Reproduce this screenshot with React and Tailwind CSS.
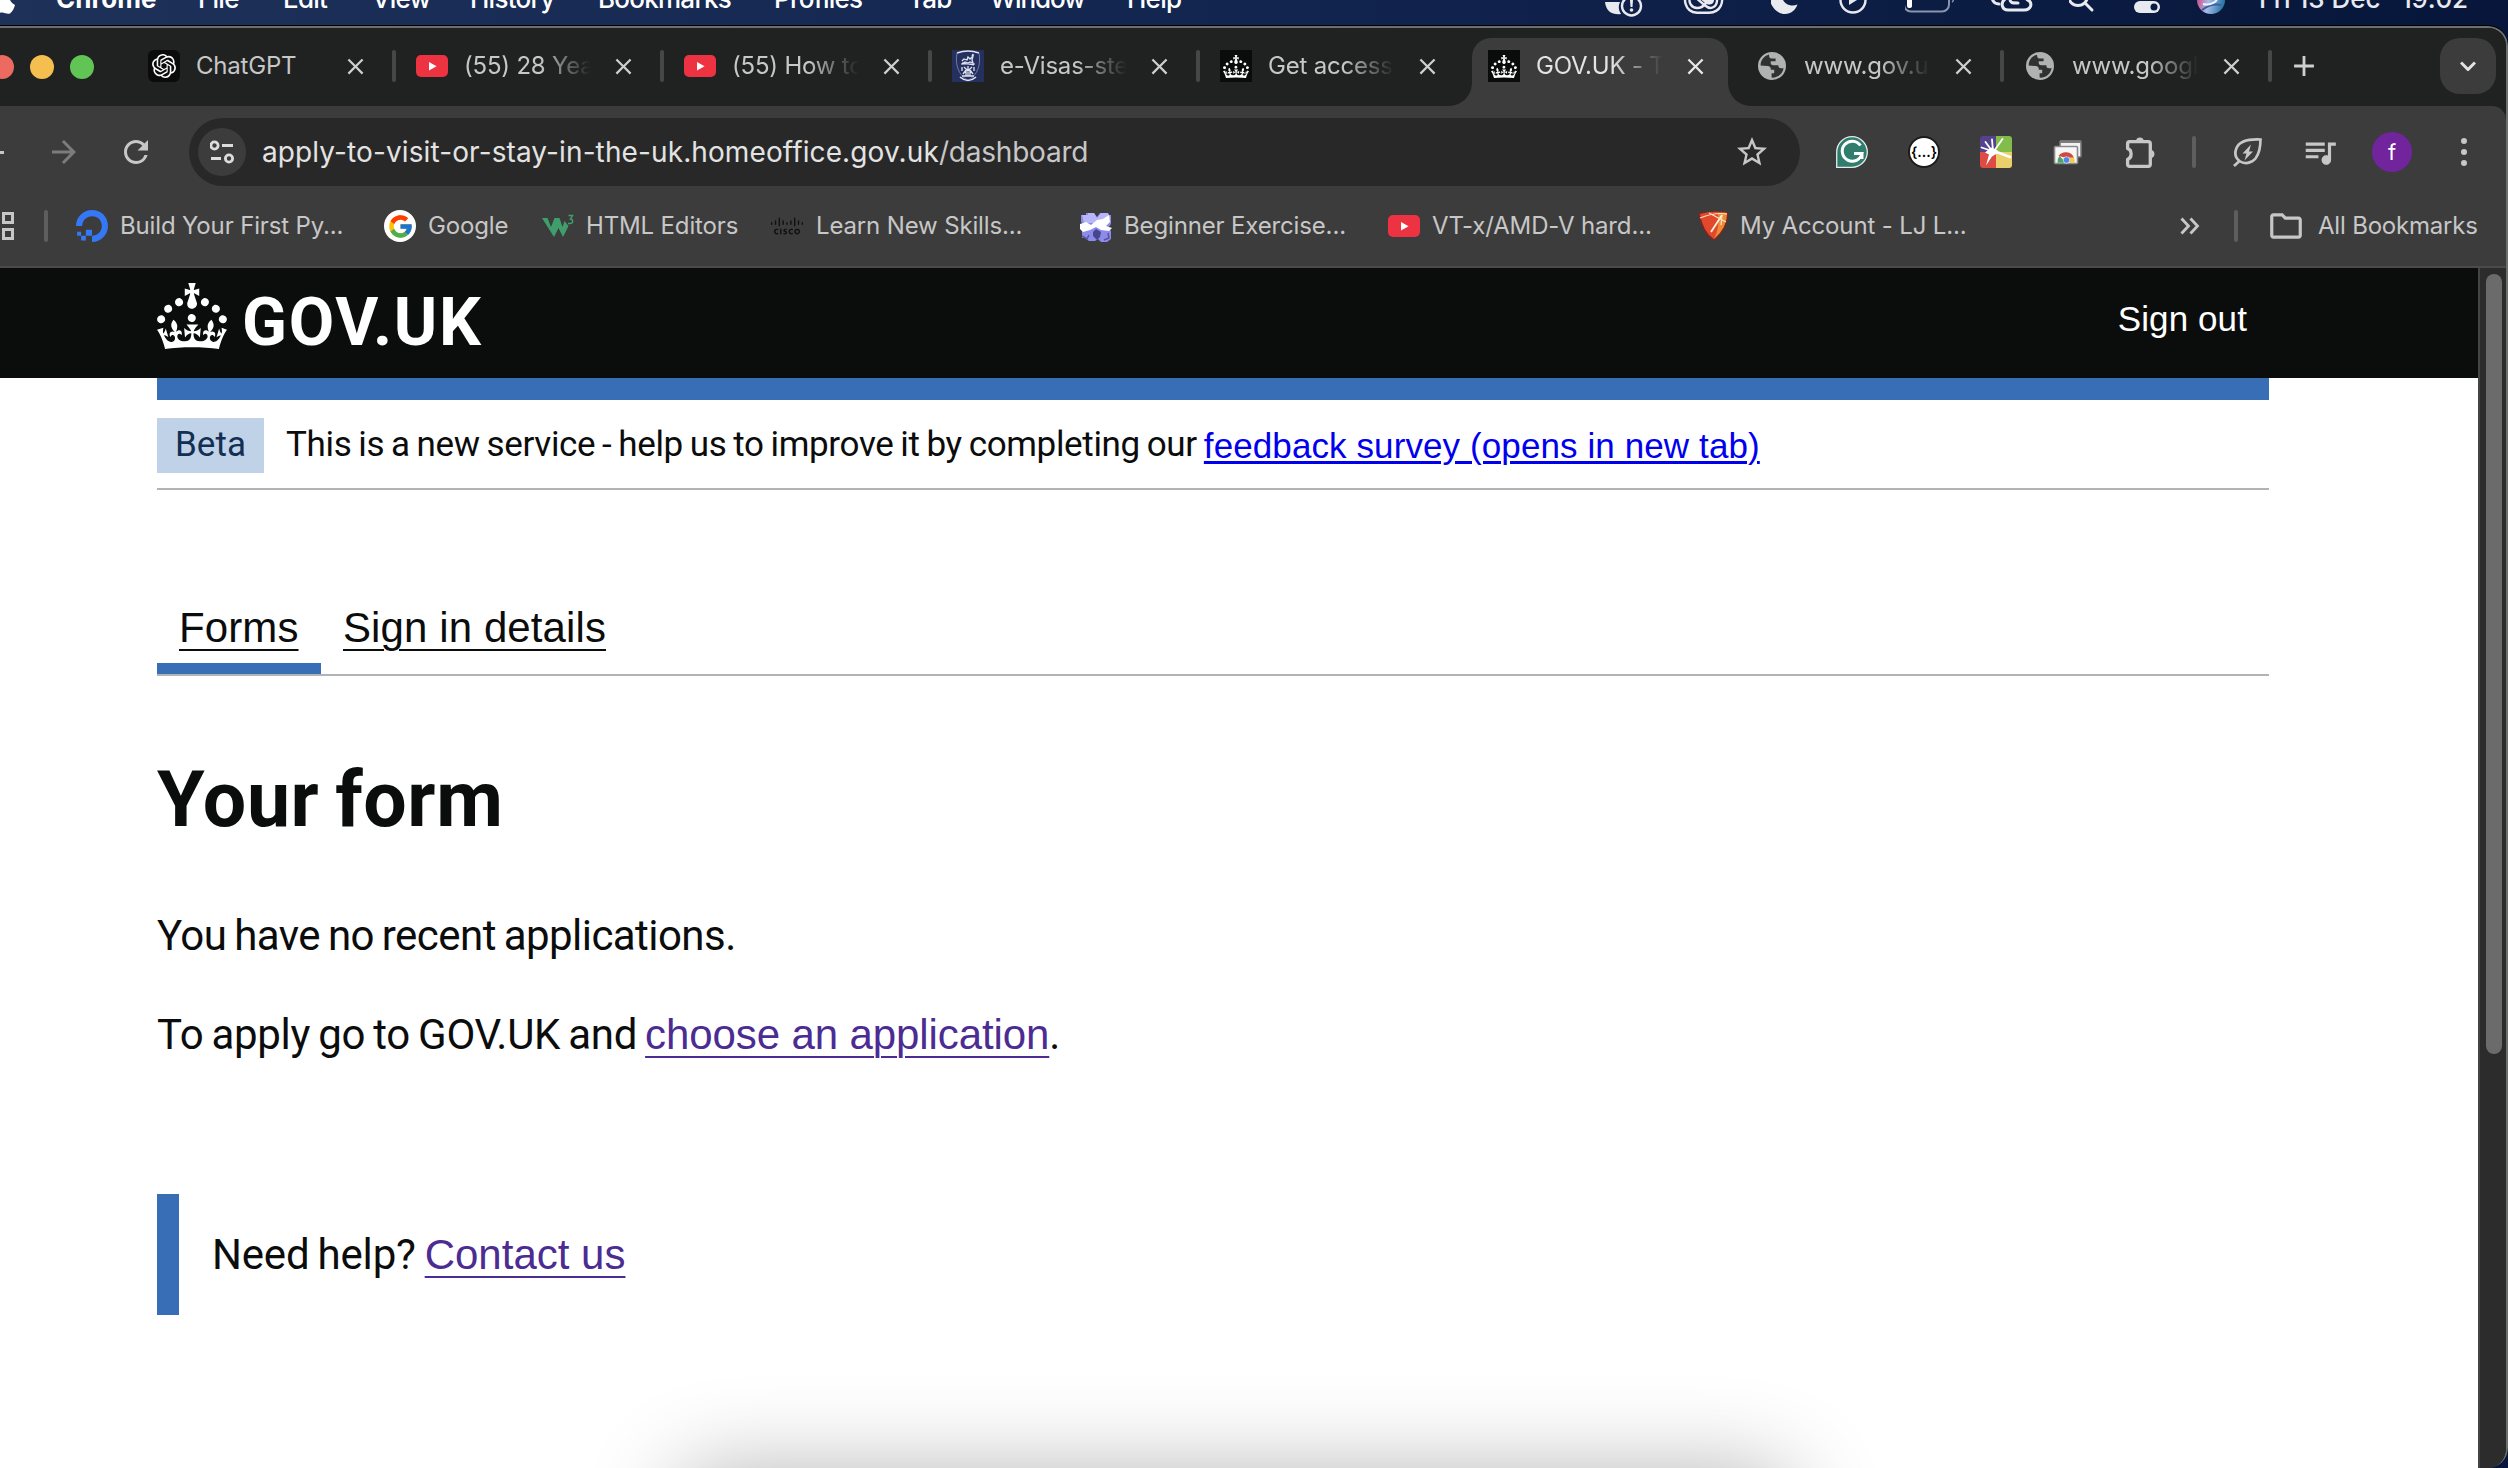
import React from "react";
import { MdRefresh, MdArrowForward, MdStarBorder, MdClose, MdAdd, MdQueueMusic, MdOutlineFolder } from "react-icons/md";
import { SiDigitalocean, SiOpenai, SiCisco } from "react-icons/si";
import { FcGoogle } from "react-icons/fc";

const CROWN =
  "M22.6 10.4c-1 .4-2-.1-2.4-1-.4-.9.1-2 1-2.4.9-.4 2 .1 2.4 1s-.1 2-1 2.4m5 3c-1 .4-2-.1-2.4-1-.4-.9.1-2 1-2.4.9-.4 2 .1 2.4 1s0 2-1 2.4m3.2 4.8c-1 .4-2-.1-2.4-1-.4-.9.1-2 1-2.4.9-.4 2 .1 2.4 1s-.1 2-1 2.4m-14.2-.6c-1 .4-2-.1-2.4-1-.4-.9.1-2 1-2.4.9-.4 2 .1 2.4 1s-.1 2-1 2.4M17 4.7l2.3 1.2V2.5l-2.3.7-.2-.2.9-3h-3.4l.9 3-.2.2-2.3-.7v3.4L15 4.7c.1.1.1.2.2.2l-1.3 4c-.1.2-.1.4-.1.6 0 1.1.8 2 1.9 2.2h.7c1-.2 1.9-1.1 1.9-2.1 0-.2 0-.4-.1-.6l-1.3-4c-.1-.2 0-.2.1-.3M9.4 10.4c.9.4 2-.1 2.4-1 .4-.9-.1-2-1-2.4-.9-.4-2 .1-2.4 1s0 2 1 2.4m-5 3c.9.4 2-.1 2.4-1 .4-.9-.1-2-1-2.4-.9-.4-2 .1-2.4 1s.1 2 1 2.4m-3.2 4.8c.9.4 2-.1 2.4-1 .4-.9-.1-2-1-2.4-.9-.4-2 .1-2.4 1s0 2 1 2.4m14.8 11c4.4 0 8.6.3 12.3.8 1.1-4.5 2.4-7 3.7-8.8l-2.5-.9c.2 1.3.3 1.9 0 2.7-.4-.4-.8-1.1-1.1-2.3l-1.2 4c.7-.5 1.3-.8 2-.9-1.1 2.5-2.6 3.1-3.5 3-1.1-.2-1.7-1.2-1.5-2.1.3-1.2 1.5-1.5 2.1-.1 1.1-2.3-.8-3-2-2.3 1.9-1.9 2.1-3.5.6-5.6-2.1 1.6-2.1 3.2-1.2 5.5-1.2-1.4-3.2-.6-2.5 1.6.9-1.4 2.1-.5 1.9.8-.2 1.1-1.7 2.1-3.5 1.9-2.7-.2-2.9-2.1-2.9-3.6.7-.1 1.9.5 2.9 1.9l.4-4.3c-1.1 1.1-2.1 1.4-3.2 1.4.4-1.2 2.1-3 2.1-3h-5.4s1.7 1.9 2.1 3c-1.1 0-2.1-.2-3.2-1.4l.4 4.3c1-1.4 2.2-2 2.9-1.9-.1 1.5-.2 3.4-2.9 3.6-1.9.2-3.4-.8-3.5-1.9-.2-1.3 1-2.2 1.9-.8.7-2.3-1.2-3-2.5-1.6.9-2.2.9-3.9-1.2-5.5-1.5 2-1.3 3.7.6 5.6-1.2-.7-3.1 0-2 2.3.6-1.4 1.8-1.1 2.1.1.2.9-.3 1.9-1.5 2.1-.9.2-2.4-.5-3.5-3 .6 0 1.2.3 2 .9l-1.2-4c-.3 1.1-.7 1.9-1.1 2.3-.3-.8-.2-1.4 0-2.7L0 21.2C1.3 23 2.6 25.5 3.7 30c3.7-.5 7.9-.8 12.3-.8";

function Crown({ className }) {
  return (
    <svg viewBox="0 0 32 30" className={className} fill="white" preserveAspectRatio="none">
      <path d={CROWN} />
    </svg>
  );
}

function CrownFavicon() {
  return (
    <span className="flex size-8 items-center justify-center bg-[#0a0c0b]">
      <Crown className="h-[23px] w-[26px]" />
    </span>
  );
}

function YouTube() {
  return (
    <svg viewBox="0 0 32 32" className="size-8">
      <rect y="5" width="32" height="22" rx="5" fill="#ed3241" />
      <path d="M13 12v8.400l7.600-4.200z" fill="white" />
    </svg>
  );
}

function ChatGPTIcon() {
  return (
    <span className="flex size-8 items-center justify-center rounded-md bg-[#0b0b0b]">
      <SiOpenai className="size-6 text-white" />
    </span>
  );
}

function Crest() {
  return (
    <svg viewBox="0 0 32 32" className="size-8" fill="none" stroke="#dfe3f2">
      <rect width="32" height="32" fill="#26305f" stroke="none" />
      <path d="M5 3Q16 -1 27 3" strokeWidth="1.400" />
      <path d="M5 3C3 14 6 25 16 30.500C26 25 29 14 27 3" strokeWidth="0.700" stroke="#8f97bd" />
      <path d="M8 27Q16 34 24 27" strokeWidth="1.600" />
      <path d="M10 11l2-2 3 1 1-3 2 2 3-3-1 4 1 3-3-1-2 1-3-1-3 2M20 6l1-2" strokeWidth="1.300" />
      <path d="M9 14h14M10 13l12 2" strokeWidth="1.100" />
      <path d="M10 17v4M12 17l4 4 4-4M22 17v4M11 24l3-4v6M21 24l-3-4v6M10 26h12M16 16v10" strokeWidth="1.300" />
    </svg>
  );
}

function Globe() {
  return (
    <svg viewBox="0 0 32 32" className="size-8">
      <circle cx="16" cy="16" r="14" fill="#b1b1b1" />
      <path d="M13 4.500C8 6 4.600 10 4.600 15.500L11.500 16c2.500 0 3.500 1.600 3.300 3.800h3.400v3.400h-2.600v4.400c6 .4 11-3.600 12-9.400h-2.200c-2.600 0-3-1.200-3-3h-5c-2.400 0-3-1.600-2.600-4h4.800V8.600h-4c-2 0-2.600-1.600-2.600-4.100z" fill="#303231" fillRule="evenodd" />
      <path d="M20 5c3.600 1.300 6.600 4.200 7.500 8.500l-3.500.2c-1 0-1.200-.8-1.200-2V9.800c-1.600 0-2.800-1-2.800-2.400z" fill="#b1b1b1" />
    </svg>
  );
}

const tabs = [
  { title: "ChatGPT", icon: ChatGPTIcon, sep: true },
  { title: "(55) 28 Years", icon: YouTube, sep: true },
  { title: "(55) How to", icon: YouTube, sep: true },
  { title: "e-Visas-step", icon: Crest, sep: true },
  { title: "Get access t", icon: CrownFavicon, sep: false },
  { title: "GOV.UK - The", icon: CrownFavicon, sep: false, active: true },
  { title: "www.gov.uk", icon: Globe, sep: true },
  { title: "www.google", icon: Globe, sep: true },
];

function Tab({ title, icon: Icon, sep, active }) {
  return (
    <div className="relative flex h-full w-[268px] shrink-0 items-center pb-0.5 pl-5">
      {active && (
        <svg viewBox="0 0 304 68" className="absolute bottom-0 -left-5 h-[68px] w-[304px]" fill="#3c3c3c">
          <path d="M0 68c14 0 24-10 24-24V20C24 8 32 0 44 0h216c12 0 20 8 20 20v24c0 14 10 24 24 24z" />
        </svg>
      )}
      <span className="relative size-8 shrink-0">
        <Icon />
      </span>
      <span
        className={`relative ml-[15px] w-[133px] overflow-hidden pl-px text-2xl tracking-[-0.200px] whitespace-nowrap ${
          title.length > 8 ? "[mask-image:linear-gradient(to_right,black_58%,transparent_96%)]" : ""
        } ${active ? "text-[#e3e3e3]" : "text-[#c7c7c7]"}`}
      >
        {title}
      </span>
      <MdClose className={`relative ml-[14px] size-[27px] shrink-0 ${active ? "text-[#e8e8e8]" : "text-[#cfcfcf]"}`} />
      <span className={`ml-[23px] h-8 w-1 shrink-0 rounded-sm ${sep ? "bg-[#474747]" : ""}`} />
    </div>
  );
}

function MenuBar() {
  return (
    <div className="flex h-[25px] overflow-hidden bg-linear-to-r from-[#1d3159] via-[#12254f] to-[#07163a] text-[26px] leading-8 font-medium text-white">
      <svg viewBox="0 0 55 25" className="h-[25px] w-[55px] shrink-0" fill="white">
        <path d="M-6 0H10c1 2 3 4 5 5-1 4-3 7-5 8.500-3 1-5-1-8-1s-4 1.500-8 1z" />
      </svg>
      <div className="-mt-[17px] flex tracking-[-0.750px]">
        <span className="w-[143px] pl-px font-bold tracking-normal">Chrome</span>
        <span className="w-[85px]">File</span>
        <span className="w-[89px]">Edit</span>
        <span className="w-[98px]">View</span>
        <span className="w-[128px]">History</span>
        <span className="w-[176px]">Bookmarks</span>
        <span className="w-[134px]">Profiles</span>
        <span className="w-[82px]">Tab</span>
        <span className="w-[137px] tracking-[-1.100px]">Window</span>
        <span className="w-[80px]">Help</span>
      </div>
      <div className="ml-[396px] flex text-[#e8eaf0]">
        <svg viewBox="0 0 80 25" className="h-[25px] w-20 shrink-0">
          <path d="M2 2h15a12 12 0 0 0 1 12C10 15 3 12 2 2z" fill="currentColor" />
          <circle cx="28.500" cy="6" r="9.500" fill="none" stroke="currentColor" strokeWidth="2.400" />
          <path d="M27 0h3l-.5 7h-2z" fill="currentColor" />
          <circle cx="28.500" cy="10" r="1.800" fill="currentColor" />
        </svg>
        <svg viewBox="0 0 88 25" className="h-[25px] w-[88px] shrink-0" fill="none" stroke="currentColor" strokeWidth="2.400">
          <path d="M6 -8C-1 -4 1 12 14 12.800h12C38 12 41 2 38 -6" />
          <path d="M7 -3C5 3 9 8 14 8c4 0 7-2 9-5" />
          <path d="M12 -3l10 8.500c6 5 13 2 12-8.500" />
          <path d="M16 -2h15c1 7-5 8-9 5z" fill="currentColor" stroke="none" />
        </svg>
        <svg viewBox="0 0 68 25" className="h-[25px] w-[68px] shrink-0" fill="currentColor">
          <path d="M-2 -6C-2 6 6 14 14 14c6 0 10.500-4 12.500-9.500C18 8 10 2 11 -6z" />
        </svg>
        <svg viewBox="0 0 66 25" className="h-[25px] w-[66px] shrink-0">
          <circle cx="14" cy="0" r="12.500" fill="none" stroke="currentColor" strokeWidth="2.400" />
          <path d="M10 -4v9l8-5z" fill="currentColor" />
        </svg>
        <svg viewBox="0 0 86 25" className="h-[25px] w-[86px] shrink-0" fill="none">
          <rect x="-1" y="-14" width="45" height="25.500" rx="7" stroke="#8b94ad" strokeWidth="2" />
          <rect x="2" y="-10" width="5" height="18" rx="2" fill="white" />
          <path d="M47 -4c2 1 2 5 0 6" stroke="#8b94ad" strokeWidth="1.500" />
        </svg>
        <svg viewBox="0 0 78 25" className="h-[25px] w-[78px] shrink-0" fill="none" stroke="currentColor" strokeWidth="3" strokeLinecap="round">
          <path d="M1 -2C2 3 5 4 8 4" />
          <path d="M14 -1C9 3 11 10 17 10h16c8 0 9-8 3-10.500" />
          <path d="M19 -1c0 4 2 4 8 4" />
        </svg>
        <svg viewBox="0 0 65 25" className="h-[25px] w-[65px] shrink-0" fill="none" stroke="currentColor" strokeWidth="3" strokeLinecap="round">
          <circle cx="9" cy="-4" r="9.500" />
          <path d="M16 3l7 7" />
        </svg>
        <svg viewBox="0 0 63 25" className="h-[25px] w-[63px] shrink-0">
          <rect x="0" y="1" width="26" height="12" rx="6" fill="currentColor" />
          <circle cx="20" cy="7" r="3.500" fill="#0a1b44" />
        </svg>
        <svg viewBox="0 0 62 25" className="h-[25px] w-[62px] shrink-0">
          <defs>
            <linearGradient id="siri" x1="0" x2="1" y1="0" y2="0.200">
              <stop offset="0.050" stopColor="#d0427c" />
              <stop offset="0.500" stopColor="#a9bbe8" />
              <stop offset="1" stopColor="#2f7aa8" />
            </linearGradient>
          </defs>
          <circle cx="14" cy="0" r="14" fill="url(#siri)" />
          <path d="M5 10Q14 3 24 5" stroke="#3c5fa0" strokeWidth="2" fill="none" />
          <path d="M6 4Q14 6 20 0" stroke="#eef2fb" strokeWidth="2" fill="none" />
        </svg>
        <span className="-mt-[17px] w-[142px] whitespace-nowrap">Fri 13 Dec</span>
        <span className="-mt-[17px] tracking-[-0.200px]">19:02</span>
      </div>
    </div>
  );
}

function TabStrip() {
  return (
    <div className="flex h-[78px] items-center bg-[#202221]">
      <div className="-ml-2.5 flex w-[138px] shrink-0 gap-4">
        <span className="size-6 rounded-full bg-[#ec6a5f]" />
        <span className="size-6 rounded-full bg-[#f5bf4f]" />
        <span className="size-6 rounded-full bg-[#61c555]" />
      </div>
      {tabs.map((t, i) => (
        <Tab key={i} {...t} />
      ))}
      <MdAdd className="mb-0.5 ml-[15px] size-[34px] shrink-0 text-[#cfcfcf]" />
      <span className="mr-2.5 mb-0.5 ml-auto flex h-14 w-14 items-center justify-center rounded-[20px] bg-[#3c3c3c]">
        <svg viewBox="0 0 16 10" className="h-2.5 w-4" fill="none" stroke="#e3e3e3" strokeWidth="3">
          <path d="M1 1.500l7 7 7-7" />
        </svg>
      </span>
    </div>
  );
}

function Extensions() {
  return (
    <div className="ml-9 flex items-center gap-10">
      <svg viewBox="0 0 32 32" className="size-8">
        <path d="M0.700 31.300V16A15.300 15.300 0 1 1 16 31.300z" fill="#2f7d6d" stroke="#e5ece9" strokeWidth="1.300" />
        <path d="M24.500 9.500A10 10 0 1 0 26 17.500h-8M26 16v7" fill="none" stroke="white" strokeWidth="3" />
      </svg>
      <span className="flex size-8 items-center justify-center rounded-full border-2 border-[#1c1c1c] bg-white text-[14px] leading-none font-semibold text-black">
        {"{...}"}
      </span>
      <svg viewBox="0 0 32 32" className="size-8">
        <path d="M3 0h13v16H0V3a3 3 0 0 1 3-3z" fill="#54428e" />
        <path d="M16 0h13a3 3 0 0 1 3 3v13H16z" fill="#82bd4c" />
        <path d="M0 16h16v16H3a3 3 0 0 1-3-3z" fill="#dd4b43" />
        <path d="M16 16h16v13a3 3 0 0 1-3 3H16z" fill="#ebcf6b" />
        <g stroke="white" strokeLinecap="round" strokeWidth="1.800">
          <path d="M12 15L1.500 11.500M12 15L5.500 6M13 15L12 3.500M14 15L22.500 3" />
          <path d="M14 15l16 6" strokeWidth="2.600" />
        </g>
        <path d="M6 29.500l3-11-4-2 6-5 7 3-1 3-5 3z" fill="white" />
      </svg>
      <svg viewBox="0 0 32 32" className="size-8">
        <rect x="8" y="5" width="21" height="16" rx="1" fill="#f2f2f2" stroke="#777" strokeWidth="1.600" />
        <rect x="8" y="4.500" width="21" height="2.500" fill="#7c7c7c" />
        <rect x="2.500" y="10.500" width="23" height="17" rx="1" fill="#f7f7f7" stroke="#8a8a8a" strokeWidth="1.600" />
        <path d="M5.500 26.700a8.500 8.500 0 0 1 2-6.700l5 5-.5 1.700z" fill="#4aa564" />
        <path d="M6.500 20a9 9 0 0 1 15.500 1.700h-8z" fill="#cf4a3d" />
        <path d="M15 21.700h7q1 2.500.8 5h-8z" fill="#f5cb4a" />
        <circle cx="14.500" cy="24" r="3.300" fill="#4f86e8" stroke="#fff" strokeWidth=".6" />
      </svg>
      <svg viewBox="0 0 34 32" className="h-8 w-[34px]" fill="none" stroke="#c7c7c7" strokeWidth="3.300">
        <path d="M5.600 5.700h18.700q2 0 2 2v20.600q0 2-2 2H5.600q-2 0-2-2v-5c2-.5 3.500-2.300 3.500-5.200s-1.500-5-3.500-5.500V7.700q0-2 2-2z" strokeLinejoin="round" />
        <path d="M12 4.500a4 4 0 0 1 7.800 0zM27.500 14a4.200 4.200 0 0 1 0 8z" fill="#c7c7c7" stroke="none" />
      </svg>
    </div>
  );
}

function Toolbar() {
  return (
    <div className="flex h-[92px] items-center">
      <span className="h-[3px] w-1 bg-[#c7c7c7]" />
      <MdArrowForward className="ml-[42px] size-9 text-[#7c7c7c]" />
      <MdRefresh className="ml-9 size-9 text-[#c7c7c7]" />
      <div className="ml-[35px] flex h-[68px] w-[1611px] items-center rounded-full bg-[#282828] pl-[9px]">
        <span className="flex size-12 items-center justify-center rounded-full bg-[#3c3c3c]">
          <svg viewBox="0 0 24 24" className="size-6" fill="none" stroke="#dcdcdc" strokeWidth="2.800">
            <circle cx="4.500" cy="5.500" r="3.600" />
            <path d="M12 5.500h11M1 18.500h10" />
            <circle cx="19" cy="18.500" r="3.600" />
          </svg>
        </span>
        <span className="ml-4 text-[28px] tracking-[0.110px] text-[#e3e3e3]">
          apply-to-visit-or-stay-in-the-uk.homeoffice.gov.uk
          <span className="tracking-[-0.200px] text-[#c7c7c7]">/dashboard</span>
        </span>
        <MdStarBorder className="mr-[30px] ml-auto size-9 text-[#c7c7c7]" />
      </div>
      <Extensions />
      <span className="ml-[34px] h-8 w-1 rounded-sm bg-[#5e5e5e]" />
      <svg viewBox="0 0 32 32" className="ml-9 size-8" fill="none" stroke="#c7c7c7" strokeWidth="2.700">
        <path d="M28.500 3.500C18 3 8 4 4.500 12c-2 5-1 10 3 13 5 3.500 12 2.500 16-2.500 4-5.500 5-12 5-19z" />
        <path d="M7.500 25L2 30" />
        <path d="M19 8.500l-8.500 9h4l-2 7 8.500-9h-4z" fill="#c7c7c7" stroke="none" />
      </svg>
      <MdQueueMusic className="ml-[37px] size-[38px] text-[#c7c7c7]" />
      <span className="ml-[33px] flex size-10 items-center justify-center rounded-full bg-[#71249c] text-[22px] text-white">f</span>
      <span className="ml-[49px] flex flex-col gap-[5px]">
        <span className="size-1.5 rounded-full bg-[#c7c7c7]" />
        <span className="size-1.5 rounded-full bg-[#c7c7c7]" />
        <span className="size-1.5 rounded-full bg-[#c7c7c7]" />
      </span>
    </div>
  );
}

function Bookmark({ icon, label, className }) {
  return (
    <span className={`flex shrink-0 items-center gap-3 tracking-[-0.150px] whitespace-nowrap ${className}`}>
      <span className="flex size-8 shrink-0 items-center justify-center">{icon}</span>
      {label}
    </span>
  );
}

function Bookmarks() {
  return (
    <div className="flex h-14 items-center text-2xl text-[#c7c7c7]">
      <svg viewBox="0 0 14 28" className="h-7 w-3.5 shrink-0" fill="none" stroke="#c7c7c7" strokeWidth="3">
        <path d="M3.500 1.500h9v9h-9zM3.500 17.500h9v9h-9z" />
      </svg>
      <span className="ml-[30px] h-8 w-1 shrink-0 rounded-sm bg-[#5e5e5e]" />
      <Bookmark className="ml-7 w-[308px]" icon={<SiDigitalocean className="size-8 text-[#3478f6]" />} label="Build Your First Py..." />
      <Bookmark
        className="w-[158px]"
        icon={
          <span className="flex size-8 items-center justify-center rounded-full bg-white">
            <FcGoogle className="size-[27px]" />
          </span>
        }
        label="Google"
      />
      <Bookmark
        className="w-[229px]"
        icon={
          <svg viewBox="0 0 32 32" className="size-8">
            <path d="M0 8h5.500l3.500 9 3.500-9h5l3 9 2-6 4 5-5.500 11-4.500-9-4.500 9z" fill="#3f9e6b" />
            <path d="M26.500 5.500h4l-2 3.500c3 0 3 4.500-.5 4.500h-2" fill="none" stroke="#3f9e6b" strokeWidth="1.500" />
          </svg>
        }
        label="HTML Editors"
      />
      <Bookmark className="w-[309px] gap-[13px]" icon={<SiCisco className="size-8 text-[#101010]" />} label="Learn New Skills..." />
      <Bookmark
        className="w-[308px]"
        icon={
          <svg viewBox="0 0 32 32" className="size-8">
            <path d="M1 5h5V3h8l3 4 3-4h8v2h3v9l-3 4 3 3v8l-4 3h-6l-3-3-3 2h-6l-4-3H2v-8l3-4-4-4z" fill="#8d8bea" />
            <path d="M2 5h6V3h6l3 5 4-5h7l2 4-2 6H4z" fill="#b9b5f8" />
            <path d="M0 14l6-2 5 3 6-5 6-1 6-4 1 7-4 4 6 2-3 3-8-1-5-3-6 3-7 2-4-4z" fill="#fff" />
            <path d="M13 22l3-3 5 3-1 5-3 3-4-4z" fill="#46458e" />
            <path d="M2 26l5 3 2-4M24 30l5-2-1-5" stroke="#57559f" strokeWidth="1.500" fill="none" />
          </svg>
        }
        label="Beginner Exercise..."
      />
      <Bookmark className="w-[309px]" icon={<YouTube />} label="VT-x/AMD-V hard..." />
      <Bookmark
        className="w-[300px] gap-[11px]"
        icon={
          <svg viewBox="0 0 32 32" className="size-8">
            <path d="M1 3q15-3 30-1 1 16-14 29Q5 24 1 3z" fill="#7c2720" />
            <path d="M3 4q14-4 27-1 0 15-13 26Q6 22 3 4z" fill="#e2492c" />
            <path d="M21 4q5-2 9-1 0 15-13 26 6-12 4-25z" fill="#ec8a35" />
            <path d="M14 22L25 5" stroke="#fff3dc" strokeWidth="1.800" />
            <path d="M3 8Q18 2 30 4M12 3l17 9M25 5l-1 10" stroke="#fbe3c0" strokeWidth="1.200" fill="none" />
          </svg>
        }
        label="My Account - LJ L..."
      />
      <svg viewBox="0 0 20 18" className="ml-[183px] h-[18px] w-5 shrink-0" fill="none" stroke="#c7c7c7" strokeWidth="2.800">
        <path d="M1.500 1.500L8.500 9l-7 7.500M10.500 1.500L17.500 9l-7 7.500" />
      </svg>
      <span className="ml-[34px] h-8 w-1 shrink-0 rounded-sm bg-[#5e5e5e]" />
      <MdOutlineFolder className="ml-[29px] size-[38px] shrink-0" />
      <span className="ml-[13px] tracking-[-0.200px] whitespace-nowrap">All Bookmarks</span>
    </div>
  );
}

const link = "font-['Liberation_Sans',sans-serif]";

function Page() {
  return (
    <div className="relative h-[1200px] w-[2478px] overflow-hidden bg-white font-['Roboto',sans-serif] text-[#0b0c0c]">
      <header className="flex h-[110px] items-start bg-[#0b0d0c] pr-[231px] pl-[157px] text-white">
        <Crown className="mt-[15px] h-[66px] w-[70px]" />
        <span className="mt-[22px] ml-[15px] text-[66px] leading-[66px] font-bold tracking-[1.700px]">GOV.UK</span>
        <a className={`mt-[31px] ml-auto text-[35px] leading-10 tracking-[0.100px] ${link}`}>Sign out</a>
      </header>
      <main className="ml-[157px] w-[2112px]">
        <div className="h-[22px] bg-[#376eb5]" />
        <div className="flex items-center border-b-2 border-[#b1b4b6] pt-[18px] pb-[15px] text-[35px] leading-[54px]">
          <strong className="w-[107px] bg-[#bfd2e8] pb-px text-center font-normal text-[#132f52]">Beta</strong>
          <span className="ml-[22px] pb-px tracking-[-0.340px] [word-spacing:-1.500px]">This is a new service - help us to improve it by completing our</span>
          <a className={`ml-[7px] text-[35px] tracking-[0.100px] text-[#0000ee] underline decoration-[3px] underline-offset-[3px] ${link}`}>
            feedback survey (opens in new tab)
          </a>
        </div>
        <nav className={`mt-[113px] flex border-b-2 border-[#b1b4b6] text-[42px] leading-[50px] ${link}`}>
          <a className="w-[164px] border-b-[11px] border-[#376eb5] px-[22px] pb-2.5 tracking-[0.100px] underline decoration-2 underline-offset-[7px]">Forms</a>
          <a className="px-[22px] tracking-[0.100px] underline decoration-2 underline-offset-[7px]">Sign in details</a>
        </nav>
        <h1 className="mt-[79px] text-[77px] leading-[90px] font-bold tracking-[0.600px] [word-spacing:-4px]">Your form</h1>
        <p className="mt-[61px] text-[42px] leading-[60px] tracking-[-0.550px] [word-spacing:-2px]">You have no recent applications.</p>
        <p className="mt-[39px] flex text-[42px] leading-[60px]">
          <span className="tracking-[-0.300px] [word-spacing:-2px]">To apply go to GOV.UK and</span>
          <a className={`ml-[8px] tracking-[-0.100px] text-[#4c2c92] underline decoration-2 underline-offset-[7px] ${link}`}>choose an application</a>
          <span>.</span>
        </p>
        <div className="mt-[129px] flex h-[121px] items-center border-l-[22px] border-[#376eb5] pl-[33px] text-[42px]">
          <span className="tracking-[-0.200px] [word-spacing:-2px]">Need help?</span>
          <a className={`ml-[9px] text-[#4c2c92] underline decoration-2 underline-offset-[7px] ${link}`}>Contact us</a>
        </div>
      </main>
      <div className="absolute top-[1204px] left-[678px] h-40 w-[1114px] rounded-[30px] shadow-[0_0_92px_rgba(0,0,0,0.3)]" />
    </div>
  );
}

export default function App() {
  return (
    <div className="h-[1468px] w-[2508px] overflow-hidden bg-[#07163a] font-['Inter',sans-serif]">
      <MenuBar />
      <div className="h-[1443px] overflow-hidden rounded-r-[20px] border-t border-black">
        <div className="h-[1442px] overflow-hidden rounded-r-[20px] border-t-2 border-r-2 border-[#6d6f6e] bg-[#202221]">
          <TabStrip />
          <div className="h-[162px] rounded-tr-[14px] border-b-2 border-[#4b4b4b] bg-[#3c3c3c]">
            <Toolbar />
            <Bookmarks />
          </div>
          <div className="flex">
            <Page />
            <div className="h-[1200px] flex-1 border-l-2 border-[#444444] bg-[#2c2c2c] pt-1.5 pl-1.5">
              <div className="h-[780px] w-4 rounded-full bg-[#6b6b6b]" />
            </div>
          </div>
        </div>
      </div>
    </div>
  );
}
